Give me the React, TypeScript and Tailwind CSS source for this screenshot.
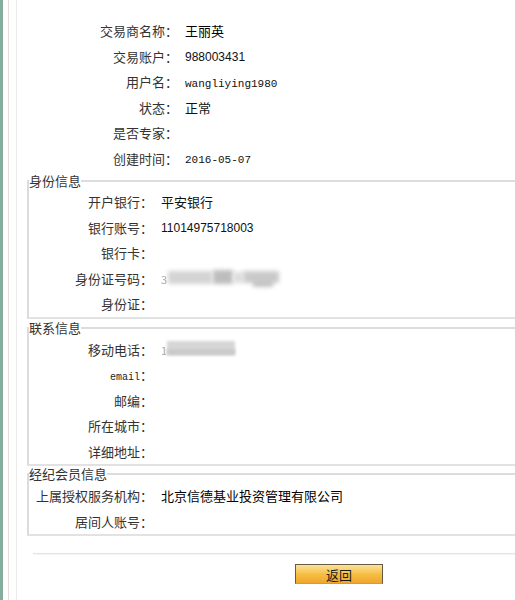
import React from "react";

const cjk = "font-['Noto_Sans_CJK_SC','Noto_Sans',sans-serif]";
const sans = "font-['Liberation_Sans','Noto_Sans_CJK_SC',sans-serif] text-[12px]";
const mono = "font-['Liberation_Mono',monospace] text-[11px]";

type RowProps = {
  label: React.ReactNode;
  value?: React.ReactNode;
  wide?: boolean;
};

// top block: label column ends at x=178, fieldset rows at x=153
const Row = ({ label, value, wide }: RowProps) => (
  <div className="flex h-[25.5px] items-center">
    <div
      className={`${wide ? "w-[161px]" : "w-[124px]"} shrink-0 text-right text-[#333]`}
    >
      {label}
    </div>
    <div className={`${wide ? "pl-[7px]" : "pl-[8px]"} text-[#111]`}>{value}</div>
  </div>
);

const Blur = ({ kind }: { kind: "id" | "phone" }) =>
  kind === "id" ? (
    <div className="relative h-[18px] w-[122px]">
      <span className="absolute left-0 top-[2px] text-[11px] text-[#a8a8a8] blur-[0.6px]">3</span>
      <div className="absolute left-[7px] top-[2px] h-[13px] w-[44px] bg-[#d4d4d4] blur-[2px]" />
      <div className="absolute left-[52px] top-[1px] h-[14px] w-[20px] bg-[#bdbdbd] blur-[2px]" />
      <div className="absolute left-[72px] top-[3px] h-[11px] w-[10px] bg-[#dedede] blur-[2px]" />
      <div className="absolute left-[82px] top-[2px] h-[12px] w-[36px] bg-[#cbcbcb] blur-[2px]" />
      <div className="absolute left-[92px] top-[10px] h-[8px] w-[20px] bg-[#c4c4c4] blur-[2px]" />
    </div>
  ) : (
    <div className="relative h-[18px] w-[76px]">
      <span className="absolute left-0 top-[2px] text-[11px] text-[#a8a8a8] blur-[0.6px]">1</span>
      <div className="absolute left-[6px] top-[1px] h-[14px] w-[68px] bg-[#d6d6d6] blur-[1.5px]" />
      <div className="absolute left-[6px] top-[9px] h-[6px] w-[68px] bg-[#cacaca] blur-[1.5px]" />
    </div>
  );

const Section = ({
  title,
  className,
  children,
}: {
  title: string;
  className: string;
  children: React.ReactNode;
}) => (
  <fieldset
    className={`ml-[10px] w-[600px] border-2 border-[#e2e2e2] border-t-[#dcdcdc] border-l-[#dcdcdc] ${className}`}
  >
    <legend className="p-0 text-[13px] leading-[16px] text-[#333]">{title}</legend>
    {children}
  </fieldset>
);

export default function App() {
  return (
    <div className={`flex h-[600px] w-[515px] overflow-hidden bg-white text-[13px] ${cjk}`}>
      {/* left frame gutter */}
      <div className="w-[3px] shrink-0 bg-[#86ae9f]" />
      <div className="ml-[5px] w-px shrink-0 bg-[#e6dcdc]" />
      <div className="ml-[7px] w-px shrink-0 bg-[#ececec]" />

      <div className="flex w-[620px] shrink-0 flex-col pt-[18px]">
        <Row wide label="交易商名称：" value={<span className="text-[13px] text-black">王丽英</span>} />
        <Row wide label="交易账户：" value={<span className={sans}>988003431</span>} />
        <Row wide label="用户名：" value={<span className={mono}>wangliying1980</span>} />
        <Row wide label="状态：" value="正常" />
        <Row wide label="是否专家：" />
        <Row wide label="创建时间：" value={<span className={mono}>2016-05-07</span>} />

        <Section title="身份信息" className="mt-[2px]">
          <Row label="开户银行：" value="平安银行" />
          <Row label="银行账号：" value={<span className={sans}>11014975718003</span>} />
          <Row label="银行卡：" />
          <Row label="身份证号码：" value={<Blur kind="id" />} />
          <Row label="身份证：" />
        </Section>

        <Section title="联系信息" className="mt-px pt-px">
          <Row label="移动电话：" value={<Blur kind="phone" />} />
          <Row
            label={
              <>
                <span className="font-['Liberation_Mono',monospace] text-[10px] text-[#222]">email</span>：
              </>
            }
          />
          <Row label="邮编：" />
          <Row label="所在城市：" />
          <Row label="详细地址：" />
        </Section>

        <Section title="经纪会员信息" className="pt-px">
          <Row label="上属授权服务机构：" value={<span className="text-black">北京信德基业投资管理有限公司</span>} />
          <Row label="居间人账号：" />
        </Section>

        <div className="ml-[16px] mt-[17px] h-[2px] border-t border-[#e4e4e4] bg-[#f6f6f6]" />

        <div className="mt-[9px] pl-[278px]">
          <button
            type="button"
            className="flex h-[20px] w-[88px] items-center justify-center border border-[#6a5a42] border-b-[#d39a35] bg-gradient-to-b from-[#fbe39a] via-[#f5bf42] to-[#efa62e] text-[13px] leading-none text-[#1a1a1a]"
          >
            返回
          </button>
        </div>
      </div>
    </div>
  );
}
